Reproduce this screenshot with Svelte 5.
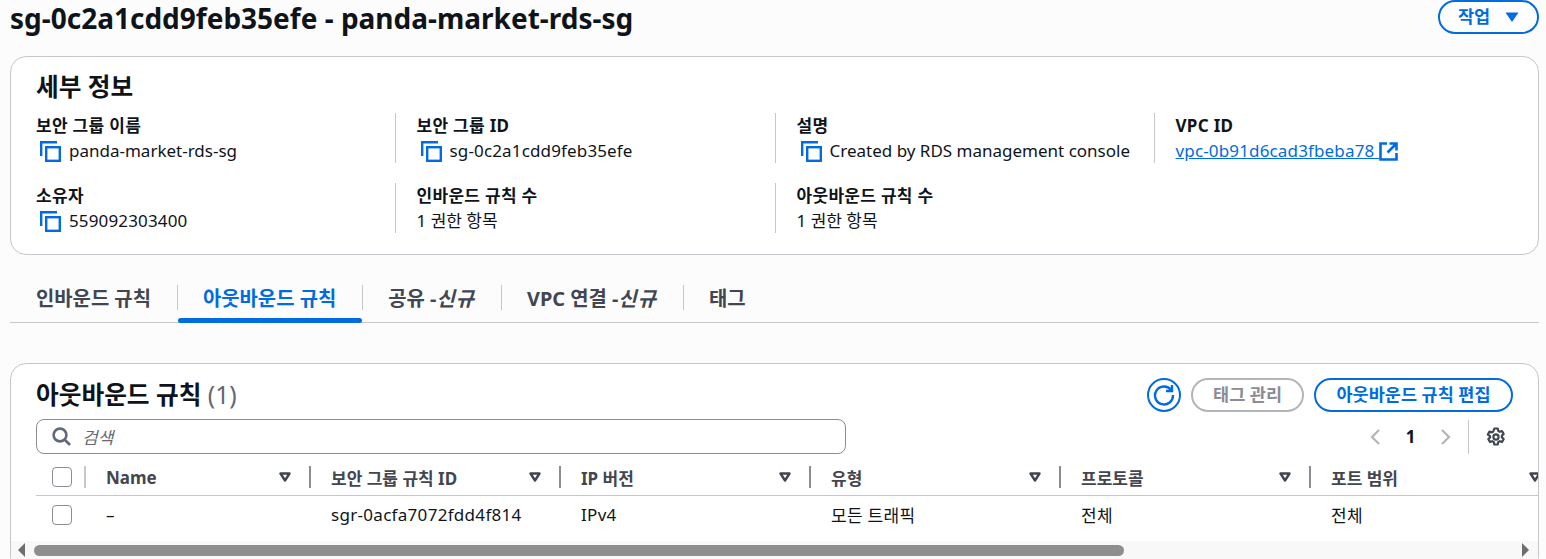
<script>
  const details = [
    { label: '보안 그룹 이름', value: 'panda-market-rds-sg', copy: true },
    { label: '보안 그룹 ID', value: 'sg-0c2a1cdd9feb35efe', copy: true, wide: true },
    { label: '설명', value: 'Created by RDS management console', copy: true },
    { label: 'VPC ID', value: 'vpc-0b91d6cad3fbeba78', link: true, wide: true },
    { label: '소유자', value: '559092303400', copy: true, wide: true },
    { label: '인바운드 규칙 수', value: '1 권한 항목' },
    { label: '아웃바운드 규칙 수', value: '1 권한 항목' }
  ]

  const tabs = [
    { label: '인바운드 규칙' },
    { label: '아웃바운드 규칙', active: true },
    { label: '공유 -', em: '신규' },
    { label: 'VPC 연결 -', em: '신규' },
    { label: '태그' }
  ]

  const columns = ['Name', '보안 그룹 규칙 ID', 'IP 버전', '유형', '프로토콜', '포트 범위']
  const row = ['–', 'sgr-0acfa7072fdd4f814', 'IPv4', '모든 트래픽', '전체', '전체']
</script>

<div class="page">
  <header class="title-row">
    <h1>sg-0c2a1cdd9feb35efe - panda-market-rds-sg</h1>
    <button class="btn actions">작업 <svg width="14" height="10" viewBox="0 0 14 10"><path d="M0.5 0.5h13L7 10z" fill="#006ce0" /></svg></button>
  </header>

  <section class="card details">
    <h2>세부 정보</h2>
    <div class="detail-grid">
      {#each details as d}
        <div class="detail">
          <div class="label">{d.label}</div>
          <div class="value" class:wide={d.wide}>
            {#if d.copy}
              <svg class="copy" width="21" height="21" viewBox="0 0 21 21" fill="none" stroke="#006ce0" stroke-width="2.4">
                <path d="M1.2 15V1.2H17" />
                <rect x="6.2" y="6.2" width="13.6" height="13.6" />
              </svg>
            {/if}
            {#if d.link}
              <a href="#top">{d.value}&nbsp;</a>
              <svg class="ext" width="19" height="19" viewBox="0 0 19 19" fill="none" stroke="#006ce0" stroke-width="2.6">
                <path d="M8 1.5H1.5v16h16V11" />
                <path d="M10.5 1.5h7v7M17 2L8.5 10.5" />
              </svg>
            {:else}
              <span>{d.value}</span>
            {/if}
          </div>
        </div>
      {/each}
    </div>
  </section>

  <nav class="tabs">
    {#each tabs as t}
      <div class="tab" class:active={t.active}>
        <span>{t.label}{#if t.em}<em>{t.em}</em>{/if}</span>
      </div>
    {/each}
  </nav>

  <section class="card rules">
    <div class="rules-head">
      <h2>아웃바운드 규칙 <span class="count">(1)</span></h2>
      <div class="rules-actions">
        <button class="refresh" aria-label="새로 고침">
          <svg width="22" height="22" viewBox="0 0 22 22" fill="none" stroke="#006ce0" stroke-width="2.4">
            <path d="M18 5.8A9 9 0 1 0 20 11" />
            <path d="M19 1v6h-6" />
          </svg>
        </button>
        <button class="btn disabled">태그 관리</button>
        <button class="btn edit">아웃바운드 규칙 편집</button>
      </div>
    </div>

    <div class="filter-row">
      <div class="search">
        <svg width="19" height="19" viewBox="0 0 19 19" fill="none" stroke="#5f6b7a" stroke-width="2.6">
          <circle cx="8" cy="8" r="6.4" />
          <path d="M12.5 12.5l5.5 5.5" />
        </svg>
        <span>검색</span>
      </div>
      <div class="pager">
        <svg width="12" height="18" viewBox="0 0 12 18" fill="none" stroke="#b4b4bb" stroke-width="2.2"><path d="M10 2L3 9l7 7" /></svg>
        <b>1</b>
        <svg width="12" height="18" viewBox="0 0 12 18" fill="none" stroke="#b4b4bb" stroke-width="2.2"><path d="M2 2l7 7-7 7" /></svg>
        <i class="sep"></i>
        <svg class="gear" width="20" height="20" viewBox="0 0 20 20" fill="none" stroke="#424650" stroke-width="2.2">
          <circle cx="10" cy="10" r="2.6" />
          <path d="M8.3 1.5h3.4l.5 2.4 1.5.9 2.3-.8 1.7 3-1.8 1.6v1.8l1.8 1.6-1.7 3-2.3-.8-1.5.9-.5 2.4H8.3l-.5-2.4-1.5-.9-2.3.8-1.7-3 1.8-1.6V9.2L1.8 7.6l1.7-3 2.3.8 1.5-.9z" stroke-linejoin="round" />
        </svg>
      </div>
    </div>

    <div class="table">
      <div class="tr thead">
        <div class="check-cell"><i class="check"></i><i class="bar light"></i></div>
        {#each columns as c, i}
          <div class="th">
            <span>{c}</span>
            <svg width="12" height="10" viewBox="0 0 12 10" fill="none" stroke="#424650" stroke-width="2.4"><path d="M1.5 1.5h9L6 8.5z" stroke-linejoin="round" /></svg>
            {#if i < columns.length - 1}<i class="bar"></i>{/if}
          </div>
        {/each}
      </div>
      <div class="tr tbody">
        <div class="check-cell"><i class="check"></i></div>
        {#each row as c}
          <div class="td">{c}</div>
        {/each}
      </div>
    </div>

    <div class="scrollbar">
      <svg width="8" height="14" viewBox="0 0 8 14"><path d="M7 0v14L0 7z" fill="#6e6e6e" /></svg>
      <div class="thumb"></div>
      <svg class="right" width="8" height="14" viewBox="0 0 8 14"><path d="M0 0v14l7-7z" fill="#6e6e6e" /></svg>
    </div>
  </section>
</div>

<style>
  :global(html), :global(body) {
    margin: 0;
    overflow: hidden;
  }
  :global(body) {
    background: #fcfcfd;
    color: #0f141a;
    font-family: 'Noto Sans', 'Noto Sans CJK KR', sans-serif;
    font-size: 17px;
  }

  .page {
    height: 559px;
    overflow: hidden;
    padding: 0 7px 0 10px;
    box-sizing: border-box;
  }

  .title-row {
    display: flex;
    justify-content: space-between;
    align-items: flex-start;
    height: 56px;
  }
  h1 {
    margin: 0;
    font-size: 28px;
    line-height: 36px;
    font-weight: 700;
  }

  .btn {
    height: 34px;
    padding: 0 20px;
    border: 2px solid #006ce0;
    border-radius: 20px;
    background: #fff;
    color: #006ce0;
    font: 700 17.5px/1 'Noto Sans', 'Noto Sans CJK KR', sans-serif;
    box-sizing: border-box;
    white-space: nowrap;
  }
  .btn.actions {
    width: 101px;
    padding: 0;
    display: flex;
    align-items: center;
    justify-content: center;
    gap: 15px;
  }
  .btn.edit {
    padding: 0 20.5px;
  }
  .btn.disabled {
    border-color: #b4b4bb;
    color: #8c8c94;
  }

  .card {
    background: #fff;
    border: 1px solid #c6c6cd;
    border-radius: 16px;
    box-sizing: border-box;
  }
  .details {
    height: 199px;
    padding: 14px 25px 0;
  }
  h2 {
    margin: 0;
    font-size: 24.7px;
    line-height: 32px;
    font-weight: 700;
  }

  .detail-grid {
    display: grid;
    grid-template-columns: 380px 380px 379px 379px;
    row-gap: 20px;
    margin-top: 10px;
  }
  .detail {
    height: 50px;
    padding-left: 20.5px;
    border-left: 1px solid #c6c6cd;
    margin-left: -21px;
    white-space: nowrap;
  }
  .detail:nth-child(4n + 1) {
    border-left: none;
    margin-left: 0;
    padding-left: 0;
  }
  .label {
    font-weight: 700;
    line-height: 25px;
    letter-spacing: 0.3px;
  }
  .value {
    display: flex;
    align-items: center;
    gap: 8px;
    line-height: 24px;
    height: 26px;
  }
  .value.wide {
    letter-spacing: 0.15px;
  }
  .copy {
    margin-left: 4px;
    flex: none;
  }
  a {
    color: #006ce0;
  }
  .ext {
    margin-left: -8px;
    flex: none;
  }

  .tabs {
    display: flex;
    height: 68px;
    padding-top: 29px;
    box-sizing: border-box;
    border-bottom: 1px solid #c6c6cd;
  }
  .tab {
    position: relative;
    height: 39px;
    padding: 0 26px;
    font-weight: 700;
    font-size: 19.9px;
    color: #424650;
    line-height: 29px;
    white-space: nowrap;
  }
  .tab + .tab::before {
    content: '';
    position: absolute;
    left: 0;
    top: 1px;
    height: 25px;
    width: 1px;
    background: #c6c6cd;
  }
  .tab.active {
    color: #006ce0;
  }
  .tab.active::after {
    content: '';
    position: absolute;
    left: 1px;
    right: 0;
    bottom: 0;
    height: 5px;
    border-radius: 3px;
    background: #006ce0;
  }
  em {
    font-style: italic;
    letter-spacing: 1px;
  }

  .rules {
    margin-top: 40px;
    height: 210px;
    overflow: hidden;
    padding: 0 0 0 25px;
    position: relative;
  }
  .rules-head {
    display: flex;
    justify-content: space-between;
    align-items: center;
    height: 55px;
    padding-right: 25px;
    padding-top: 6px;
    box-sizing: border-box;
  }
  .count {
    color: #656871;
    font-weight: 400;
  }
  .rules-actions {
    display: flex;
    align-items: center;
    gap: 10px;
  }
  .refresh {
    width: 34px;
    height: 34px;
    border: 2px solid #006ce0;
    border-radius: 50%;
    background: #fff;
    padding: 0;
    display: flex;
    align-items: center;
    justify-content: center;
  }

  .filter-row {
    display: flex;
    justify-content: space-between;
    height: 35px;
    padding-right: 32px;
  }
  .search {
    width: 810px;
    height: 35px;
    box-sizing: border-box;
    border: 1px solid #8c8c94;
    border-radius: 8px;
    display: flex;
    align-items: center;
    gap: 11px;
    padding-left: 15px;
    color: #656871;
    font-style: italic;
  }
  .pager {
    display: flex;
    align-items: center;
    color: #0f141a;
  }
  .pager b {
    width: 59px;
    text-align: center;
  }
  .sep {
    width: 1px;
    height: 34px;
    background: #c6c6cd;
    margin: 0 17px 0 16px;
  }

  .table {
    width: 1600px;
    margin-top: 5px;
  }
  .tr {
    display: grid;
    grid-template-columns: 49px 225px repeat(5, 250px);
    align-items: center;
  }
  .thead {
    height: 36px;
    border-bottom: 1px solid #c6c6cd;
    color: #424650;
    font-weight: 700;
  }
  .tbody {
    height: 37px;
  }
  .check-cell {
    position: relative;
    height: 22px;
  }
  .check {
    position: absolute;
    left: 16px;
    top: 1px;
    width: 20px;
    height: 20px;
    box-sizing: border-box;
    border: 1px solid #8c8c94;
    border-radius: 4px;
    background: #fff;
  }
  .th {
    position: relative;
    display: flex;
    align-items: center;
    justify-content: space-between;
    height: 22px;
    padding: 0 19px 0 21px;
  }
  .td {
    padding-left: 21px;
    white-space: nowrap;
    letter-spacing: 0.3px;
  }
  .bar {
    position: absolute;
    right: -1px;
    top: 0;
    width: 2px;
    height: 22px;
    background: #8c8c94;
  }
  .bar.light {
    right: auto;
    left: 48px;
    background: #c6c6cd;
  }

  .scrollbar {
    position: absolute;
    left: 0;
    right: 0;
    top: 177px;
    height: 25px;
    background: #f8f8f8;
    display: flex;
    align-items: flex-start;
    padding: 2px 8px 0 7px;
    box-sizing: border-box;
  }
  .thumb {
    margin: 2px 0 0 8px;
    width: 1090px;
    height: 11px;
    border-radius: 6px;
    background: #8e8e8e;
  }
  .right {
    margin-left: auto;
  }
</style>
